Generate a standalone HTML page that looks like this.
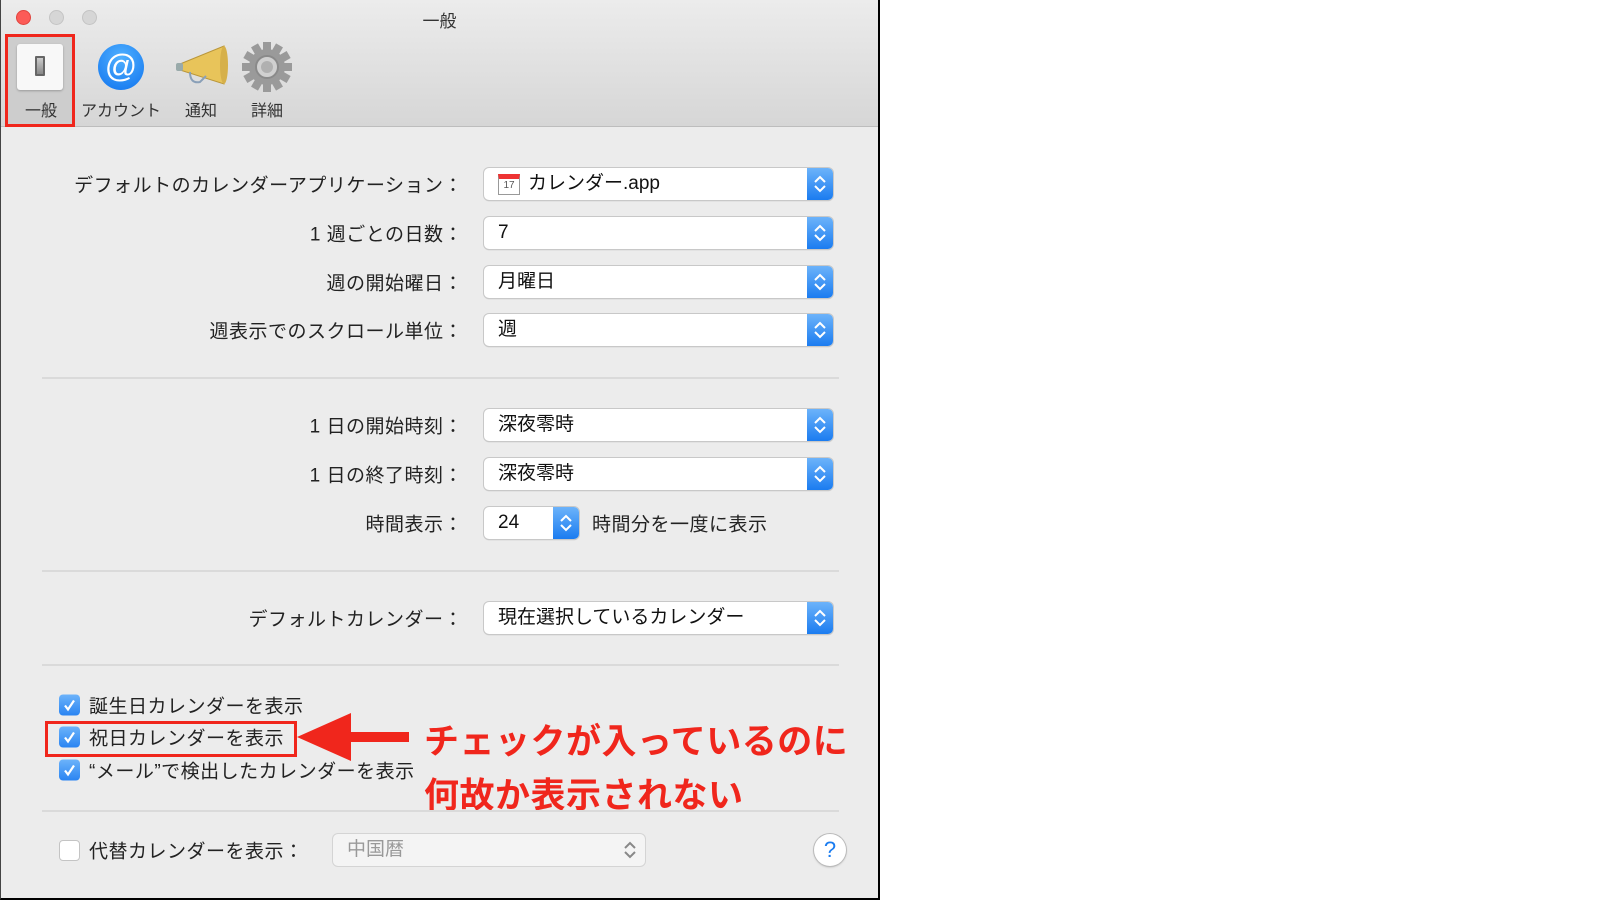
<!DOCTYPE html>
<html><head><meta charset="utf-8"><style>
*{margin:0;padding:0;box-sizing:border-box}
body{width:1600px;height:900px;background:#fff;position:relative;overflow:hidden;font-family:"Liberation Sans","Noto Sans CJK JP",sans-serif;color:#222}
.win{position:absolute;left:0;top:0;width:880px;height:900px;background:#ececec;border-right:2px solid #000;border-bottom:2px solid #000;border-left:1px solid #444;overflow:hidden}
.tb{position:absolute;left:0;top:0;right:0;height:127px;background:linear-gradient(#ececec,#d6d6d6);border-bottom:1px solid #bdbdbd}
.tl{position:absolute;top:10px;width:15px;height:15px;border-radius:50%;background:#d6d6d6;border:1px solid #c4c4c4}
.title{position:absolute;left:0;right:0;top:7px;text-align:center;font-size:17px;color:#333}
.sel{position:absolute;left:4px;top:34px;width:70px;height:93px;background:#cdcdcd;border:3px solid #f0261c}
.lab{position:absolute;top:97px;font-size:16px;color:#333;transform:translateX(-50%);white-space:nowrap}
.r{position:absolute;right:415px;font-size:19px;letter-spacing:0.5px;color:#222;white-space:nowrap;transform:translateY(-50%)}
.pop{position:absolute;left:483px;width:349px;height:32px;background:#fff;border-radius:5px;box-shadow:0 0 0 1px #c8c8c8,0 1px 1px #aaa;transform:translateY(-50%);font-size:19px;line-height:32px;padding-left:14px;color:#111}
.st{position:absolute;right:0;top:0;width:26px;height:32px;background:linear-gradient(#6cb3fa,#1b7cf0);border-radius:0 5px 5px 0}
.st svg{position:absolute;left:6px;top:6px}
.sep{position:absolute;left:41px;width:797px;height:2px;background:#dadada}
.cb{position:absolute;left:58px;width:21px;height:21px;border-radius:4px;background:linear-gradient(#6cb3fa,#2a84f2);transform:translateY(-50%)}
.cb svg{position:absolute;left:3px;top:3px}
.ct{position:absolute;left:88px;font-size:19px;letter-spacing:0.5px;transform:translateY(-50%);white-space:nowrap}
.red{position:absolute;color:#f0261c;font-weight:bold;font-size:35px;white-space:nowrap;transform:translateY(-50%);letter-spacing:0.5px}
</style></head><body>
<div class="win">
<div class="tb"></div>
<div class="tl" style="left:15px;background:#fc5b57;border-color:#e0443e"></div>
<div class="tl" style="left:48px"></div>
<div class="tl" style="left:81px"></div>
<div class="title">一般</div>
<div class="sel"></div>
<div style="position:absolute;left:16px;top:44px;width:46px;height:46px;background:#f8f8f8;border-radius:3px;box-shadow:0 1px 2px #999"></div>
<div style="position:absolute;left:34px;top:56px;width:10px;height:20px;border:2px solid #666;border-radius:1px;background:linear-gradient(#ccc,#888)"></div>
<div style="position:absolute;left:97px;top:44px;width:46px;height:46px;border-radius:50%;background:radial-gradient(circle at 50% 30%,#4fb0ff,#1073ee);color:#fff;font-size:32px;text-align:center;line-height:44px">@</div>
<svg style="position:absolute;left:175px;top:44px" width="52" height="46"><polygon points="4,20 48,2 48,40 4,26" fill="#e8c45a" stroke="#b9963a"/><ellipse cx="48" cy="21" rx="4" ry="19" fill="#d6b04a"/><rect x="0" y="19" width="7" height="8" fill="#9aa" rx="2"/><path d="M14 28 Q14 40 24 38 L30 32" fill="none" stroke="#8aa0b8" stroke-width="2"/></svg>
<svg style="position:absolute;left:241px;top:42px" width="50" height="50" viewBox="-25 -25 50 50"><g fill="#9a9a9a"><circle r="18"/><g id="t"><rect x="-4" y="-25" width="8" height="10"/></g><use href="#t" transform="rotate(30)"/><use href="#t" transform="rotate(60)"/><use href="#t" transform="rotate(90)"/><use href="#t" transform="rotate(120)"/><use href="#t" transform="rotate(150)"/><use href="#t" transform="rotate(180)"/><use href="#t" transform="rotate(210)"/><use href="#t" transform="rotate(240)"/><use href="#t" transform="rotate(270)"/><use href="#t" transform="rotate(300)"/><use href="#t" transform="rotate(330)"/></g><circle r="11" fill="#d0d0d0" stroke="#8a8a8a" stroke-width="2"/><circle r="6" fill="#b0b0b0"/></svg>
<div class="lab" style="left:40px">一般</div>
<div class="lab" style="left:120px">アカウント</div>
<div class="lab" style="left:200px">通知</div>
<div class="lab" style="left:266px">詳細</div>

<div class="r" style="top:184px">デフォルトのカレンダーアプリケーション：</div>
<div class="pop" style="top:184px;padding-left:44px"><div style="position:absolute;left:14px;top:6px;width:22px;height:21px;background:#fff;border:1px solid #999;border-top:5px solid #e33;font-size:10px;line-height:14px;text-align:center;color:#555">17</div>カレンダー.app<div class="st"><svg width="14" height="20"><path d="M2 8 L7 3 L12 8 M2 12 L7 17 L12 12" fill="none" stroke="#fff" stroke-width="2"/></svg></div></div>
<div class="r" style="top:233px">1 週ごとの日数：</div>
<div class="pop" style="top:233px">7<div class="st"><svg width="14" height="20"><path d="M2 8 L7 3 L12 8 M2 12 L7 17 L12 12" fill="none" stroke="#fff" stroke-width="2"/></svg></div></div>
<div class="r" style="top:282px">週の開始曜日：</div>
<div class="pop" style="top:282px">月曜日<div class="st"><svg width="14" height="20"><path d="M2 8 L7 3 L12 8 M2 12 L7 17 L12 12" fill="none" stroke="#fff" stroke-width="2"/></svg></div></div>
<div class="r" style="top:330px">週表示でのスクロール単位：</div>
<div class="pop" style="top:330px">週<div class="st"><svg width="14" height="20"><path d="M2 8 L7 3 L12 8 M2 12 L7 17 L12 12" fill="none" stroke="#fff" stroke-width="2"/></svg></div></div>
<div class="sep" style="top:377px"></div>
<div class="r" style="top:425px">1 日の開始時刻：</div>
<div class="pop" style="top:425px">深夜零時<div class="st"><svg width="14" height="20"><path d="M2 8 L7 3 L12 8 M2 12 L7 17 L12 12" fill="none" stroke="#fff" stroke-width="2"/></svg></div></div>
<div class="r" style="top:474px">1 日の終了時刻：</div>
<div class="pop" style="top:474px">深夜零時<div class="st"><svg width="14" height="20"><path d="M2 8 L7 3 L12 8 M2 12 L7 17 L12 12" fill="none" stroke="#fff" stroke-width="2"/></svg></div></div>
<div class="r" style="top:523px">時間表示：</div>
<div class="pop" style="top:523px;width:95px">24<div class="st"><svg width="14" height="20"><path d="M2 8 L7 3 L12 8 M2 12 L7 17 L12 12" fill="none" stroke="#fff" stroke-width="2"/></svg></div></div>
<div class="ct" style="left:591px;top:523px">時間分を一度に表示</div>
<div class="sep" style="top:570px"></div>
<div class="r" style="top:618px">デフォルトカレンダー：</div>
<div class="pop" style="top:618px">現在選択しているカレンダー<div class="st"><svg width="14" height="20"><path d="M2 8 L7 3 L12 8 M2 12 L7 17 L12 12" fill="none" stroke="#fff" stroke-width="2"/></svg></div></div>
<div class="sep" style="top:664px"></div>

<div class="cb" style="top:705px"><svg width="15" height="15"><path d="M3 8 L6 12 L12 3" fill="none" stroke="#fff" stroke-width="2.2"/></svg></div>
<div class="ct" style="top:705px">誕生日カレンダーを表示</div>
<div class="cb" style="top:737px"><svg width="15" height="15"><path d="M3 8 L6 12 L12 3" fill="none" stroke="#fff" stroke-width="2.2"/></svg></div>
<div class="ct" style="top:737px">祝日カレンダーを表示</div>
<div class="cb" style="top:770px"><svg width="15" height="15"><path d="M3 8 L6 12 L12 3" fill="none" stroke="#fff" stroke-width="2.2"/></svg></div>
<div class="ct" style="top:770px">“メール”で検出したカレンダーを表示</div>
<div style="position:absolute;left:44px;top:721px;width:252px;height:36px;border:3px solid #f0261c"></div>
<svg style="position:absolute;left:294px;top:710px" width="120" height="56"><polygon points="2,27 56,3 56,22 114,22 114,32 56,32 56,51" fill="#f0261c"/></svg>
<div class="red" style="left:423px;top:739px">チェックが入っているのに</div>
<div class="red" style="left:423px;top:793px">何故か表示されない</div>
<div class="sep" style="top:810px"></div>

<div style="position:absolute;left:58px;top:840px;width:21px;height:21px;border-radius:4px;background:#fff;border:1px solid #c4c4c4"></div>
<div class="ct" style="top:850px">代替カレンダーを表示：</div>
<div style="position:absolute;left:332px;top:834px;width:312px;height:32px;border-radius:5px;background:#f4f4f4;box-shadow:0 0 0 1px #d4d4d4;font-size:19px;line-height:32px;padding-left:14px;color:#999">中国暦<svg style="position:absolute;right:8px;top:6px" width="14" height="20"><path d="M2 8 L7 3 L12 8 M2 12 L7 17 L12 12" fill="none" stroke="#888" stroke-width="2"/></svg></div>
<div style="position:absolute;left:813px;top:834px;width:32px;height:32px;border-radius:50%;background:#fff;box-shadow:0 0 0 1px #bbb,0 1px 2px #aaa;color:#1a7cf0;font-size:22px;text-align:center;line-height:32px">?</div>
</div>
</body></html>
